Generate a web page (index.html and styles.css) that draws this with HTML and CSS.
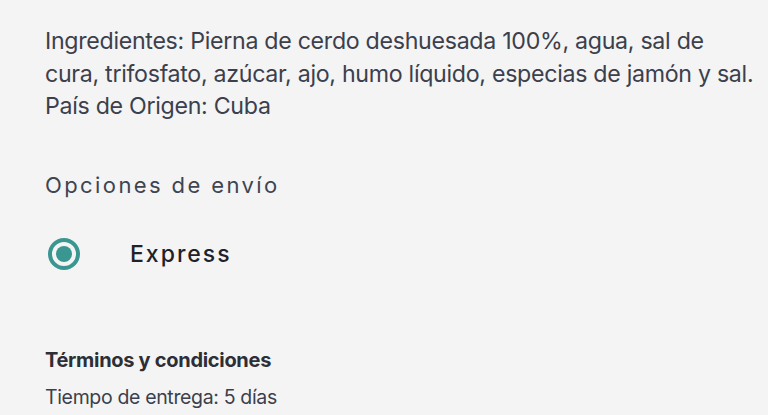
FILE: index.html
```html
<!DOCTYPE html>
<html lang="es">
<head>
    <meta charset="UTF-8">
    <meta name="viewport" content="width=device-width, initial-scale=1.0">
    <title>Producto</title>
    <link rel="stylesheet" href="styles.css">
</head>
<body>
    <div class="container">
        <p class="description">
            Ingredientes: Pierna de cerdo deshuesada 100%, agua, sal de cura, trifosfato, azúcar, ajo, humo líquido, especias de jamón y sal.<br>
            País de Origen: Cuba
        </p>

        <div class="shipping">
            <h2>Opciones de envío</h2>
            <label class="option">
                <span class="radio"><span class="radio-dot"></span></span>
                <span class="option-label">Express</span>
            </label>
        </div>

        <div class="terms">
            <h3>Términos y condiciones</h3>
            <p>Tiempo de entrega: 5 días</p>
        </div>
    </div>
</body>
</html>
```

FILE: styles.css
```css
* {
    box-sizing: border-box;
}

body {
    margin: 0;
    background: #f4f4f4;
    font-family: Inter, 'Noto Sans', sans-serif;
    color: #3b404c;
}

.container {
    padding: 25px 10px 0 45px;
    max-width: 768px;
}

.description {
    margin: 0;
    font-size: 23.2px;
    letter-spacing: -0.3px;
    line-height: 32.5px;
}

.shipping {
    margin-top: 46px;
}

.shipping h2 {
    margin: 0;
    font-size: 22px;
    font-weight: 400;
    letter-spacing: 2.4px;
    line-height: 32px;
    color: #3d4452;
}

.option {
    display: flex;
    align-items: center;
    gap: 50px;
    margin-top: 37px;
    padding-left: 3px;
}

.radio {
    width: 32px;
    height: 32px;
    border-radius: 50%;
    border: 4px solid #3a9690;
    display: flex;
    align-items: center;
    justify-content: center;
}

.radio-dot {
    width: 16px;
    height: 16px;
    border-radius: 50%;
    background: #3a9690;
}

.option-label {
    font-size: 23px;
    font-weight: 500;
    letter-spacing: 2px;
    color: #1f2229;
}

.terms {
    margin-top: 78px;
}

.terms h3 {
    margin: 0;
    font-size: 20px;
    font-weight: 700;
    letter-spacing: -0.3px;
    line-height: 24px;
    color: #2c2f36;
}

.terms p {
    margin: 13px 0 0;
    font-size: 19.5px;
    letter-spacing: -0.35px;
    line-height: 24px;
}
```
